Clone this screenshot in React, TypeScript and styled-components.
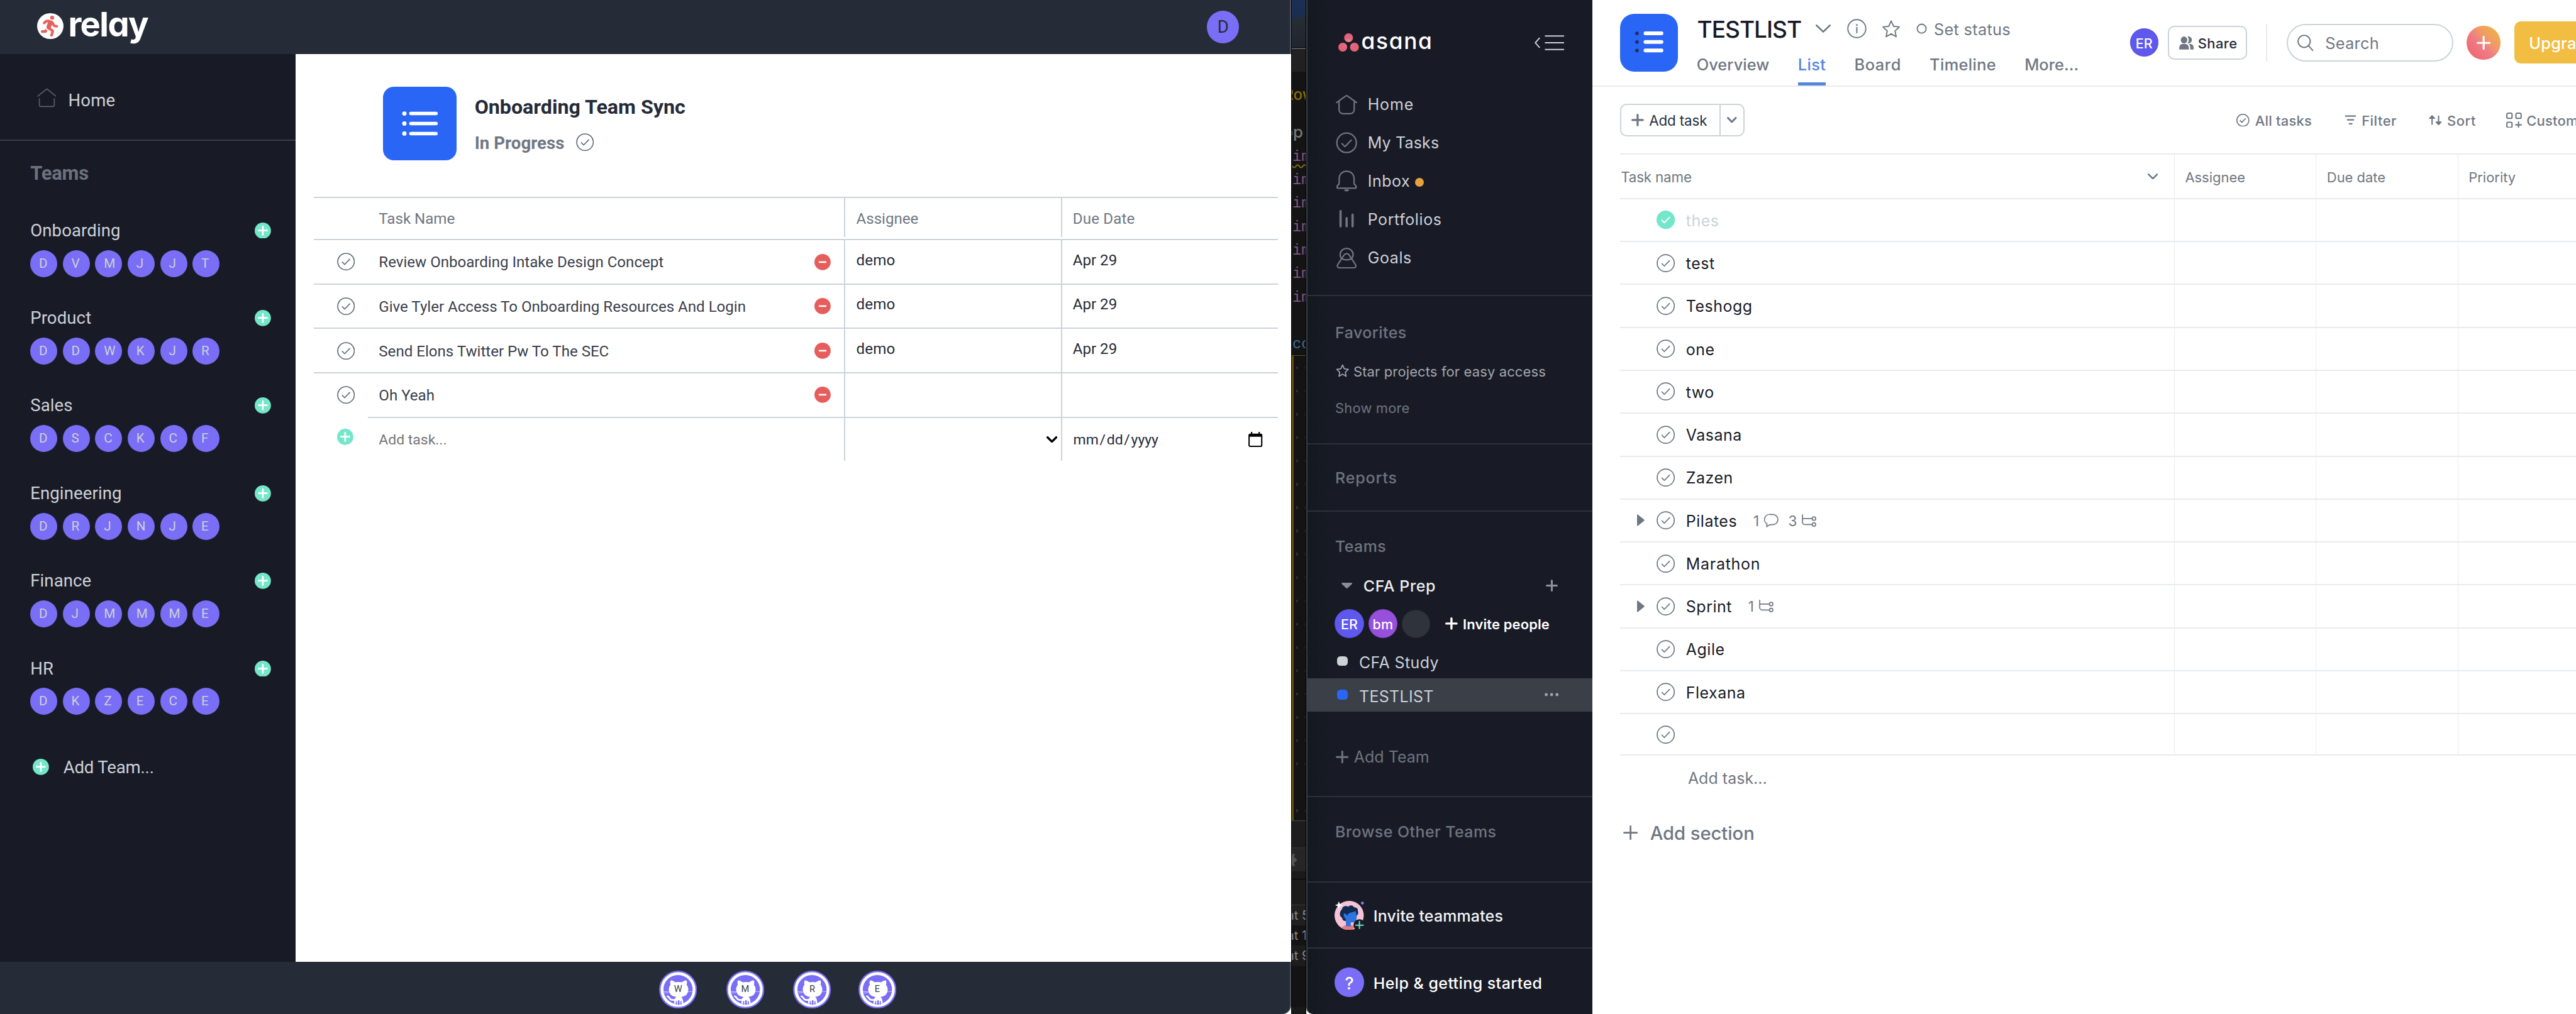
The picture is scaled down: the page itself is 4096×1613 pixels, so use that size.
import React from 'react';
import styled, { createGlobalStyle, css } from 'styled-components';
import { FaPersonRunning } from 'react-icons/fa6';

/* ---------- theme ---------- */

const c = {
  ink: '#181b26',
  bar: '#252b37',
  rule: '#3b3e48',
  sideRule: '#2b313c',
  purple: '#796ef5',
  mint: '#74e6ca',
  red: '#e55e5c',
  blue: '#2a66f5',
  grey: '#6f7782',
  muted: '#6f747f',
  line: '#cbd3da',
  hair: '#e8ebee',
  pale: '#cdd1d8',
};

const GlobalStyle = createGlobalStyle`
  *, *::before, *::after { box-sizing: border-box; }
  html, body { margin: 0; padding: 0; background: #fff; overflow: hidden; }
  svg { display: block; flex: none; }
`;

const Desktop = styled.div`
  zoom: 0.8605;
  display: grid;
  grid-template-columns: 2386px 28px 2346px;
  width: 4760px;
  height: 1875px;
  overflow: hidden;
  white-space: nowrap;
`;

interface TextProps {
  $size: number;
  $color?: string;
  $weight?: number;
  $ls?: number;
  $shift?: number;
}

const Text = styled.span<TextProps>`
  font-size: ${(p) => p.$size}px;
  font-weight: ${(p) => p.$weight ?? 400};
  color: ${(p) => p.$color ?? 'inherit'};
  letter-spacing: ${(p) => p.$ls ?? 0}px;
  line-height: 1.2;
  padding: 3px 0 0 1px;
  flex: none;
  ${(p) => p.$shift !== undefined && css`margin-top: ${p.$shift}px;`}
`;

/* ---------- shared icons ---------- */

const PlusIcon = ({ size, stroke, color }: { size: number; stroke: number; color: string }) => (
  <svg width={size} height={size} viewBox={`0 0 ${size} ${size}`} fill="none" stroke={color} strokeWidth={stroke} strokeLinecap="round">
    <path d={`M${size / 2} ${stroke / 2}V${size - stroke / 2}M${stroke / 2} ${size / 2}H${size - stroke / 2}`} />
  </svg>
);

const CheckIcon = ({ size = 34, stroke = 2, color = c.grey }: { size?: number; stroke?: number; color?: string }) => (
  <svg width={size} height={size} viewBox="0 0 34 34" fill="none" stroke={color} strokeWidth={stroke} strokeLinecap="round" strokeLinejoin="round">
    <circle cx="17" cy="17" r="15.8" />
    <path d="M10 17.8l4.4 4.6L24 12.4" />
  </svg>
);

const DoneIcon = () => (
  <svg width="34" height="34" viewBox="0 0 34 34" fill="none">
    <circle cx="17" cy="17" r="17" fill={c.mint} />
    <path d="M10 17.8l4.4 4.6L24 12.4" stroke="#fff" strokeWidth="2.2" strokeLinecap="round" strokeLinejoin="round" />
  </svg>
);

const MintPlus = () => (
  <svg width="30" height="30" viewBox="0 0 30 30">
    <circle cx="15" cy="15" r="15" fill={c.mint} />
    <path d="M15 7.4v15.2M7.4 14.8h15.2" stroke="#fff" strokeWidth="3.2" strokeLinecap="round" />
  </svg>
);

const RedMinus = () => (
  <svg width="30" height="30" viewBox="0 0 30 30">
    <circle cx="15" cy="15" r="15" fill={c.red} />
    <path d="M8 15h14" stroke="#fff" strokeWidth="3" />
  </svg>
);

const ChevronIcon = ({ w, h, stroke, color = c.grey }: { w: number; h: number; stroke: number; color?: string }) => (
  <svg width={w} height={h} viewBox={`0 0 ${w} ${h}`} fill="none" stroke={color} strokeWidth={stroke} strokeLinecap="round" strokeLinejoin="round">
    <path d={`M${stroke / 2} ${stroke / 2}L${w / 2} ${h - stroke / 2}L${w - stroke / 2} ${stroke / 2}`} />
  </svg>
);

/* ---------- relay window ---------- */

const RelayWindow = styled.div`
  display: grid;
  grid-template-rows: 100px 1678px 97px;
  font-family: Roboto, sans-serif;
  min-width: 0;
`;

const TopBar = styled.header`
  display: flex;
  align-items: center;
  justify-content: space-between;
  padding: 0 94px 0 69px;
  background: ${c.bar};
  border-right: 2.4px solid #4d525d;
`;

const RelayLogo = styled.div`
  display: flex;
  align-items: center;
  gap: 9px;
  margin-top: -4px;
`;

const RunnerDisc = styled.div`
  width: 48px;
  height: 48px;
  border-radius: 50%;
  background: #fff;
  color: #e8605c;
  display: flex;
  align-items: center;
  justify-content: center;
`;

const RelayWord = styled.span`
  font: 700 63px/1 Inter, sans-serif;
  font-feature-settings: 'cv11';
  letter-spacing: -1.8px;
  color: #fff;
  margin-top: -8px;
`;

const UserDisc = styled.div`
  width: 60px;
  height: 60px;
  border-radius: 50%;
  background: ${c.purple};
  color: ${c.bar};
  font-size: 32px;
  display: flex;
  align-items: center;
  justify-content: center;
  padding: 0 0 1px 1px;
`;

const RelayBody = styled.div`
  display: grid;
  grid-template-columns: 546px 1fr;
  background: #fff;
`;

const RelaySidebar = styled.aside`
  background: ${c.ink};
  color: ${c.pale};
`;

const HomeLink = styled.div`
  display: flex;
  align-items: center;
  gap: 21px;
  height: 160px;
  padding: 2px 0 0 68px;
  border-bottom: 2.4px solid ${c.rule};
`;

const SidebarHeading = styled.div`
  display: flex;
  align-items: center;
  height: 118px;
  padding-left: 55px;
`;

const TeamGroup = styled.section`
  height: 162px;
  padding: 28px 45px 28px 55px;
`;

const TeamHeader = styled.div`
  display: flex;
  align-items: center;
  justify-content: space-between;
  height: 36px;
  margin-bottom: 20px;
  svg { margin-top: 4px; }
`;

const MemberList = styled.div`
  display: flex;
  gap: 10px;
  padding-left: 1px;
`;

const Member = styled.span`
  width: 50px;
  height: 50px;
  border-radius: 50%;
  background: ${c.purple};
  font-size: 24px;
  line-height: 51px;
  padding-left: 16px;
`;

const AddTeamLink = styled.div`
  display: flex;
  align-items: center;
  gap: 25px;
  height: 136px;
  padding-left: 61px;
`;

const BoardHeader = styled.div`
  display: flex;
  gap: 32px;
  height: 264px;
  padding: 60px 0 0 162px;
`;

const ListTile = styled.div`
  width: 136px;
  height: 136px;
  border-radius: 20px;
  background: ${c.blue};
`;

const BoardTitle = styled.div`
  display: grid;
  grid-template-rows: 74px 58px;
`;

const TitleLine = styled.div<{ $gap: number }>`
  display: flex;
  align-items: center;
  gap: ${(p) => p.$gap}px;
`;

const RelayTable = styled.div`
  width: 1782px;
  margin-left: 34px;
`;

const RelayRow = styled.div<{ $head?: boolean }>`
  display: grid;
  grid-template-columns: 100px 880px 400px 402px;
  height: ${(p) => (p.$head ? 78 : 82)}px;
`;

const RelayCell = styled.div<{ $split?: boolean; $raise?: number; $noRule?: boolean; $short?: boolean; $end?: number }>`
  display: flex;
  align-items: center;
  justify-content: space-between;
  height: ${(p) => (p.$short ? '74px' : '100%')};
  padding: 0 ${(p) => p.$end ?? 0}px ${(p) => p.$raise ?? 0}px 19px;
  border-top: 2.4px solid ${(p) => (p.$noRule ? 'transparent' : c.line)};
  border-left: ${(p) => (p.$split ? `2.4px solid ${c.line}` : '0')};
  font-size: 28px;
  color: ${c.bar};
`;

const MarkCell = styled(RelayCell)`
  justify-content: flex-start;
  padding-left: 43px;
`;

const DateField = styled.span`
  font-size: 26.67px;
  padding-top: 2px;
  span { padding: 0 2px; }
`;

const RelayFooter = styled.footer`
  display: flex;
  gap: 54px;
  padding: 16px 0 0 1218px;
  background: ${c.bar};
  border-right: 2.4px solid #4d525d;
  border-bottom-right-radius: 16px;
`;

const CatBadge = styled.div<{ $pull?: boolean }>`
  position: relative;
  width: 70px;
  height: 70px;
  margin-left: ${(p) => (p.$pull ? -4 : 0)}px;
`;

const CatLetter = styled.span`
  position: absolute;
  inset: 0;
  display: flex;
  align-items: center;
  justify-content: center;
  font-size: 17px;
  color: #3a3f4b;
  padding-bottom: 1px;
`;

const teams: [string, string][] = [
  ['Onboarding', 'DVMJJT'],
  ['Product', 'DDWKJR'],
  ['Sales', 'DSCKCF'],
  ['Engineering', 'DRJNJE'],
  ['Finance', 'DJMMME'],
  ['HR', 'DKZECE'],
];

const relayTasks: [string, string, string][] = [
  ['Review Onboarding Intake Design Concept', 'demo', 'Apr 29'],
  ['Give Tyler Access To Onboarding Resources And Login', 'demo', 'Apr 29'],
  ['Send Elons Twitter Pw To The SEC', 'demo', 'Apr 29'],
  ['Oh Yeah', '', ''],
];

const CatIcon = () => (
  <svg width="70" height="70" viewBox="0 0 70 70">
    <circle cx="35" cy="35" r="35" fill={c.purple} />
    <circle cx="35" cy="35" r="29.6" fill="none" stroke="#fff" strokeWidth="5.2" />
    <path d="M21.6 18c-1.7 3-1.2 6.200-.4 8.200C19 28.500 18 31.500 18 35c0 9 6.500 13.300 14 13.600-3 2-4.300 5.400-4.300 12.400h17c0-7-1.200-10.400-4.200-12.400C48 48.300 54 44 54 35c0-3.500-1.200-6.500-3.200-8.800.8-2 1.200-5.200-.2-8.200-3.300 0-6.600 1.800-8.600 3.600-3.500-1-8.500-1-12 0-2-1.800-5.100-3.600-8.400-3.600z" fill="#fff" />
    <path d="M15.600 47.400c3.400.2 3.600 6.100 7.600 6.600 3 .5 6 .2 8-.4" fill="none" stroke="#fff" strokeWidth="3.200" strokeLinecap="round" />
    <path d="M31.800 57v5M40.400 57v5" stroke={c.purple} strokeWidth="2" strokeLinecap="round" />
    <path d="M36.200 56v6" stroke={c.purple} strokeWidth="3" strokeLinecap="round" />
    <path d="M8 38.500l10 .6M9 41.500l9-1.200M54 39l10-.4" stroke="#fff" strokeOpacity=".55" strokeWidth="1.200" />
  </svg>
);

const Relay = () => (
  <RelayWindow>
    <TopBar>
      <RelayLogo>
        <RunnerDisc><FaPersonRunning size={39} /></RunnerDisc>
        <RelayWord>relay</RelayWord>
      </RelayLogo>
      <UserDisc>D</UserDisc>
    </TopBar>
    <RelayBody>
      <RelaySidebar>
        <HomeLink>
          <svg width="36" height="38" viewBox="0 0 36 38" fill="none" stroke="#5f636e" strokeWidth="1.8" strokeLinecap="round" strokeLinejoin="round">
            <path d="M1 17.500L18 4l17 13.500M4.200 22v12.500c0 1.200.8 2 2 2h23.600c1.200 0 2-.8 2-2V22" />
          </svg>
          <Text $size={32} $ls={0.25} $shift={7}>Home</Text>
        </HomeLink>
        <SidebarHeading><Text $size={36} $weight={700} $color="#6d717c" $ls={-0.25}>Teams</Text></SidebarHeading>
        {teams.map(([name, members]) => (
          <TeamGroup key={name}>
            <TeamHeader><Text $size={32} $ls={0.15}>{name}</Text><MintPlus /></TeamHeader>
            <MemberList>{members.split('').map((m, i) => <Member key={i}>{m}</Member>)}</MemberList>
          </TeamGroup>
        ))}
        <AddTeamLink><MintPlus /><Text $size={32} $ls={-0.18} $shift={-3}>Add Team...</Text></AddTeamLink>
      </RelaySidebar>
      <main>
        <BoardHeader>
          <ListTile>
            <svg width="136" height="136" viewBox="0 0 136 136" stroke="#fff" strokeLinecap="round">
              <path d="M51.500 49.500H98M51.500 68H98M51.500 86.500H98" strokeWidth="6.400" />
              <path d="M39.500 49.500h.01M39.500 68h.01M39.500 86.500h.01" strokeWidth="8" />
            </svg>
          </ListTile>
          <BoardTitle>
            <TitleLine $gap={0}><Text $size={37.4} $weight={700} $color={c.bar}>Onboarding Team Sync</Text></TitleLine>
            <TitleLine $gap={21}>
              <Text $size={32} $weight={700} $color={c.grey} $ls={0.1}>In Progress</Text>
              <CheckIcon size={33} color="#636b78" />
            </TitleLine>
          </BoardTitle>
        </BoardHeader>
        <RelayTable>
          <RelayRow $head>
            <MarkCell $short />
            <RelayCell $short><Text $size={28} $color={c.grey} $shift={2}>Task Name</Text></RelayCell>
            <RelayCell $short $split><Text $size={28} $color={c.grey} $shift={2}>Assignee</Text></RelayCell>
            <RelayCell $short $split><Text $size={28} $color={c.grey} $shift={2} $ls={0.2}>Due Date</Text></RelayCell>
          </RelayRow>
          {relayTasks.map(([name, who, due]) => (
            <RelayRow key={name}>
              <MarkCell><CheckIcon size={33} color="#636b78" /></MarkCell>
              <RelayCell $end={25}><Text $size={28} $color="#3b404c">{name}</Text><RedMinus /></RelayCell>
              <RelayCell $split $raise={9}><Text $size={28} $ls={0.2}>{who}</Text></RelayCell>
              <RelayCell $split $raise={9}><Text $size={28}>{due}</Text></RelayCell>
            </RelayRow>
          ))}
          <RelayRow>
            <MarkCell $noRule $raise={8}><MintPlus /></MarkCell>
            <RelayCell><Text $size={26.67} $color="#757575">Add task...</Text></RelayCell>
            <RelayCell $split $end={6}><span /><ChevronIcon w={20} h={12} stroke={4} color="#000" /></RelayCell>
            <RelayCell $split $end={29}>
              <DateField><span>mm</span>/<span>dd</span>/<span>yyyy</span></DateField>
              <svg width="26" height="28" viewBox="0 0 26 28" fill="none" stroke="#000">
                <rect x="1.300" y="4.300" width="23.400" height="22.400" rx="2" strokeWidth="2.400" />
                <path d="M1.500 6.500h23" strokeWidth="5" />
                <path d="M6 0v4M20 0v4" strokeWidth="2.400" />
              </svg>
            </RelayCell>
          </RelayRow>
        </RelayTable>
      </main>
    </RelayBody>
    <RelayFooter>
      {['W', 'M', 'R', 'E'].map((l) => (
        <CatBadge key={l} $pull={l === 'E'}><CatIcon /><CatLetter>{l}</CatLetter></CatBadge>
      ))}
    </RelayFooter>
  </RelayWindow>
);

/* ---------- editor showing between the two windows ---------- */

const EditorStrip = styled.div`
  overflow: hidden;
  background: #141414;
  border-left: 1.2px solid #000;
  border-right: 1.2px solid #000;
  font-family: Inter, sans-serif;
`;

const Wallpaper = styled.div`
  height: 88px;
  background: linear-gradient(165deg, #1b2f57 0, #1b2d50 34%, #272b34 42%, #1f252e 100%);
  border-bottom: 1.2px solid #000;
`;

const EditorTab = styled.div`
  height: 44px;
  background: #212121;
  border-top: 2.4px solid #555;
`;

const EditorWord = styled.div<{ $h: number; $x: number; $size: number; $color: string }>`
  height: ${(p) => p.$h}px;
  line-height: ${(p) => p.$h}px;
  margin-left: ${(p) => p.$x}px;
  font-size: ${(p) => p.$size}px;
  font-weight: 500;
  color: ${(p) => p.$color};
`;

const CodeLine = styled.div<{ $color: string; $wavy?: boolean; $top?: number }>`
  height: 43.4px;
  line-height: 43.4px;
  margin-top: ${(p) => p.$top ?? 0}px;
  font-family: 'Liberation Mono', monospace;
  font-size: 27.5px;
  padding-left: 1px;
  color: ${(p) => p.$color};
  ${(p) => p.$wavy && css`
    text-decoration: underline wavy #8a7000 2px;
    text-underline-offset: 6px;
  `}
`;

const SelectionBox = styled.div`
  height: 859px;
  margin-top: -1px;
  padding: 19px 0 0 4px;
  border-left: 3.5px solid #5f5012;
  border-top: 1.2px solid #5f5012;
`;

const DotRow = styled.div<{ $empty?: boolean }>`
  display: flex;
  justify-content: space-between;
  height: 43.1px;
  visibility: ${(p) => (p.$empty ? 'hidden' : 'visible')};
  &::before, &::after { content: ''; width: 4.500px; height: 5px; background: #2e2e2e; }
  &::after { width: 1.500px; }
`;

const PanelBlock = styled.div<{ $h: number; $bg: string; $top?: string }>`
  height: ${(p) => p.$h}px;
  line-height: ${(p) => p.$h}px;
  background: ${(p) => p.$bg};
  border-top: ${(p) => (p.$top ? `1.2px solid ${p.$top}` : '0')};
  color: #878787;
  font-size: 23.500px;
  text-indent: -9px;
  overflow: hidden;
`;

const Editor = () => (
  <EditorStrip>
    <Wallpaper />
    <EditorTab />
    <EditorWord $h={86} $x={-15} $size={28} $color="#8a7000">Row</EditorWord>
    <EditorWord $h={50} $x={-16} $size={30} $color="#777">op</EditorWord>
    {[0, 1, 2, 3, 4, 5, 6].map((i) => <CodeLine key={i} $color="#85577f" $wavy={i === 0}>import</CodeLine>)}
    <CodeLine $color="#3b6b96" $top={43}>const</CodeLine>
    <SelectionBox>{Array.from({ length: 20 }, (_, i) => <DotRow key={i} $empty={i === 18} />)}</SelectionBox>
    <PanelBlock $h={50} $bg="#1d1d1d" $top="#4a4a4a" />
    <PanelBlock $h={44} $bg="#262626" $top="#333">
      <svg width="9" height="44" viewBox="0 0 9 44" fill="none" stroke="#555" strokeWidth="4.500"><path d="M0 22h9M0 17a5 5 0 0 1 0 10M2 15l2-4M2 29l2 4" /></svg>
    </PanelBlock>
    <PanelBlock $h={15} $bg="#1a1a1a" />
    <PanelBlock $h={47} $bg="#1c1c1c" $top="#000" />
    <PanelBlock $h={38} $bg="#202020" $top="#3a3a3a">at 5</PanelBlock>
    <PanelBlock $h={38} $bg="#141414">at 1</PanelBlock>
    <PanelBlock $h={38} $bg="#1d1d1d">at 9</PanelBlock>
    <PanelBlock $h={76} $bg="#131313" />
    <PanelBlock $h={14} $bg="#191919" />
  </EditorStrip>
);

/* ---------- asana window ---------- */

const AsanaWindow = styled.div`
  display: grid;
  grid-template-columns: 528px 1818px;
  font-family: Inter, sans-serif;
  overflow: hidden;
`;

const AsanaSidebar = styled.aside`
  background: linear-gradient(90deg, #141920 0, ${c.ink} 60px);
  border-left: 2.4px solid #3a3e47;
  border-bottom-left-radius: 12px;
  color: ${c.pale};
`;

const AsanaTop = styled.div`
  display: flex;
  align-items: center;
  height: 157.600px;
  padding: 0 52px 0 57px;
`;

const AsanaWord = styled.span`
  font: 500 41px/1 Inter, sans-serif;
  font-feature-settings: 'cv11';
  letter-spacing: 2px;
  color: #fff;
  margin: -4px auto 0 4px;
`;

const NavList = styled.nav`
  height: 390px;
  border-bottom: 2.4px solid ${c.sideRule};
`;

const NavItem = styled.div`
  display: flex;
  align-items: center;
  gap: 18px;
  height: 70.800px;
  padding-left: 52px;
  svg { stroke: #70757f; fill: none; stroke-width: 2.600; stroke-linecap: round; stroke-linejoin: round; }
`;

const UnreadDot = styled.i`
  width: 16px;
  height: 16px;
  border-radius: 50%;
  background: #e6a33c;
  margin: 4px 0 0 -9px;
`;

const SideSection = styled.section<{ $h: number; $pad?: number }>`
  height: ${(p) => p.$h}px;
  padding-top: ${(p) => p.$pad ?? 0}px;
  border-bottom: 2.4px solid ${c.sideRule};
  &:last-child { border-bottom: 0; }
`;

const SideLine = styled.div<{ $h: number; $x?: number; $gap?: number; $top?: number; $end?: number; $active?: boolean }>`
  display: flex;
  align-items: center;
  gap: ${(p) => p.$gap ?? 0}px;
  height: ${(p) => p.$h}px;
  margin-top: ${(p) => p.$top ?? 0}px;
  padding: 0 ${(p) => p.$end ?? 0}px 0 ${(p) => p.$x ?? 50}px;
  background: ${(p) => (p.$active ? '#3b3f47' : 'transparent')};
`;

const Spacer = styled.span`
  flex: 1;
`;

const Person = styled.span<{ $bg: string; $size?: number }>`
  flex: none;
  width: ${(p) => p.$size ?? 54}px;
  height: ${(p) => p.$size ?? 54}px;
  border-radius: 50%;
  background: ${(p) => p.$bg};
  box-shadow: inset 0 0 2px rgba(0, 0, 0, 0.35);
  color: #fff;
  font-size: 25px;
  font-weight: 500;
  display: flex;
  align-items: center;
  justify-content: center;
  padding-top: 2px;
`;

const ProjectSwatch = styled.span<{ $bg: string }>`
  width: 20px;
  height: 18px;
  border-radius: 6px;
  background: ${(p) => p.$bg};
  margin-top: -2px;
`;

const HelpDisc = styled(Person)`
  font-size: 31px;
  font-weight: 500;
  box-shadow: none;
`;

const StarIcon = ({ size, stroke, color }: { size: number; stroke: number; color: string }) => (
  <svg width={size} height={size} viewBox="0 0 33 33" fill="none" stroke={color} strokeWidth={stroke} strokeLinejoin="round">
    <path d="M16.500 2.500l4.200 9.300 10.100 1.200-7.500 7 2 10-8.800-5-8.800 5 2-10-7.500-7 10.100-1.200z" />
  </svg>
);

const InviteArt = () => (
  <svg width="54" height="54" viewBox="0 0 54 54">
    <circle cx="27" cy="27" r="27" fill="#f4c3d6" />
    <path d="M13 49c5-4 9-4 14-4s7 0 9 2l-2 6c-8 2.300-15 .5-21-4z" fill="#ea7a80" />
    <path d="M14 15c0-5 8-7 11-4 4-4 9-3 11 1 5 0 8 3 7 7 2 3 0 8-3 9l-17 9c-6 1-9-2-9-6-5-2-6-10 0-16z" fill="#102a52" />
    <path d="M17 24c1-2 5 0 7 4 0-4 2-5 5-6 5-1 8-2 10-3 1 4 2 8 2 11l-1 7c-2 3-6 3-10 3v7h-9V34c-3-3-5-7-4-10z" fill="#2e74dc" />
    <circle cx="46" cy="45" r="11" fill="#181b26" />
    <path d="M46 38v13M39.500 45H53" stroke="#6ce3c4" strokeWidth="2.400" strokeLinecap="round" />
    <path d="M8 1l2 5 5 2-5 2-2 5-2-5-5-2 5-2z" fill="#fff" />
    <circle cx="51.500" cy="4" r="2.600" fill="#8b83f2" />
  </svg>
);

const Sidebar = () => (
  <AsanaSidebar>
    <AsanaTop>
      <svg width="38" height="34" viewBox="0 0 38 34">
        <defs>
          <radialGradient id="petal" gradientUnits="userSpaceOnUse" cx="19" cy="18" r="20">
            <stop offset="0" stopColor="#f2a55c" /><stop offset=".5" stopColor="#e2628a" /><stop offset="1" stopColor="#e36468" />
          </radialGradient>
        </defs>
        <g fill="url(#petal)"><circle cx="19" cy="8.200" r="8.200" /><circle cx="8.200" cy="25.600" r="8.200" /><circle cx="29.800" cy="25.600" r="8.200" /></g>
      </svg>
      <AsanaWord>asana</AsanaWord>
      <svg width="55" height="28" viewBox="0 0 55 28" fill="none" stroke="#cfd3d9" strokeWidth="2.200" strokeLinecap="round">
        <path d="M9 5.500L1.500 14 9 22.500M20 1.500h34M20 14h34M20 26.500h34" />
      </svg>
    </AsanaTop>
    <NavList>
      <NavItem>
        <svg width="40" height="40" viewBox="0 0 40 40"><path d="M1.500 16.500L18.500 4.200c.9-.7 2.100-.7 3 0l17 12.300M6 14v16a7 7 0 0 0 7 7h14a7 7 0 0 0 7-7V14" /></svg>
        <Text $size={29} $ls={1}>Home</Text>
      </NavItem>
      <NavItem>
        <svg width="40" height="40" viewBox="0 0 40 40"><circle cx="20" cy="20" r="18" /><path d="M11.500 21.500l5.500 5.500L28.500 15" /></svg>
        <Text $size={29} $ls={0.23}>My Tasks</Text>
      </NavItem>
      <NavItem>
        <svg width="40" height="40" viewBox="0 0 40 40"><path d="M20 1.500c-8 0-13.800 6-13.800 14v9.500c-1.600 1.200-3 3-3.800 5-.7 1.500.2 3 2 3h31.200c1.800 0 2.700-1.500 2-3-.8-2-2.200-3.800-3.800-5v-9.500c0-8-5.800-14-13.800-14zM17 36.500c1.500 1.500 4.500 1.500 6 0z" /></svg>
        <Text $size={29} $ls={0.65}>Inbox</Text>
        <UnreadDot />
      </NavItem>
      <NavItem>
        <svg width="40" height="40" viewBox="0 0 40 40"><path d="M8.800 4.500v28M20 17.500v15M31 11v21.500" strokeWidth="4.200" /></svg>
        <Text $size={29} $ls={0.7}>Portfolios</Text>
      </NavItem>
      <NavItem>
        <svg width="40" height="40" viewBox="0 0 40 40"><path d="M11 21.500a12 11.500 0 1 1 18 0c-5 3-13 3-18 0z" /><path d="M15.500 14.500L3.600 32.500c-1.800 3 0 6 3.400 6h26c3.400 0 5.200-3 3.400-6L24.500 14.500c-2.300-3.300-6.700-3.300-9 0z" /></svg>
        <Text $size={29} $ls={0.72}>Goals</Text>
      </NavItem>
    </NavList>
    <SideSection $h={274.500} $pad={33}>
      <SideLine $h={67}><Text $size={29} $weight={500} $color={c.muted} $ls={0.55}>Favorites</Text></SideLine>
      <SideLine $h={75} $x={51.500} $gap={7}>
        <StarIcon size={25} stroke={2.600} color="#a2a6ad" />
        <Text $size={25.500} $color="#a2a6ad" $ls={0.17}>Star projects for easy access</Text>
      </SideLine>
      <SideLine $h={60}><Text $size={25.500} $color={c.muted} $ls={0.19}>Show more</Text></SideLine>
    </SideSection>
    <SideSection $h={124}>
      <SideLine $h={122}><Text $size={29} $weight={500} $color={c.muted} $ls={1}>Reports</Text></SideLine>
    </SideSection>
    <SideSection $h={528} $pad={24}>
      <SideLine $h={79}><Text $size={29} $weight={500} $color={c.muted} $ls={0.45}>Teams</Text></SideLine>
      <SideLine $h={68} $x={63} $gap={19} $end={64}>
        <svg width="20" height="11" viewBox="0 0 20 11" fill="#8a8d94"><path d="M1.500 0h17c1.300 0 1.800 1.300.9 2.200L11 10.300a1.500 1.500 0 0 1-2 0L.6 2.200C-.3 1.300.2 0 1.500 0z" /></svg>
        <Text $size={29} $weight={450} $color="#eceef0" $ls={0.7}>CFA Prep</Text>
        <Spacer />
        <PlusIcon size={22} stroke={3.600} color="#8e9198" />
      </SideLine>
      <SideLine $h={72} $gap={8}>
        <Person $bg="#5f58ee">ER</Person>
        <Person $bg="#9650dc">bm</Person>
        <Person $bg="#2f333b" $size={52} />
        <SideLine $h={54} $x={20} $gap={9}>
          <PlusIcon size={23} stroke={4} color="#fff" />
          <Text $size={25.500} $weight={600} $color="#fff" $ls={0.15}>Invite people</Text>
        </SideLine>
      </SideLine>
      <SideLine $h={62} $top={3} $x={54} $gap={20}>
        <ProjectSwatch $bg={c.pale} /><Text $size={29} $ls={0.5} $shift={3}>CFA Study</Text>
      </SideLine>
      <SideLine $h={62} $x={54} $gap={20} $end={62} $active>
        <ProjectSwatch $bg={c.blue} /><Text $size={29} $ls={0.39} $shift={4}>TESTLIST</Text>
        <Spacer />
        <svg width="26" height="8" viewBox="0 0 26 8" fill="#a2a6ad"><circle cx="3" cy="3.500" r="2.800" /><circle cx="13" cy="3.500" r="2.800" /><circle cx="23" cy="3.500" r="2.800" /></svg>
      </SideLine>
      <SideLine $h={86} $top={40} $x={51.500} $gap={9}>
        <PlusIcon size={24} stroke={3.400} color={c.muted} />
        <Text $size={29} $color={c.muted} $ls={0.06}>Add Team</Text>
      </SideLine>
    </SideSection>
    <SideSection $h={158}>
      <SideLine $h={126}><Text $size={29} $weight={500} $color={c.muted} $ls={0.53}>Browse Other Teams</Text></SideLine>
    </SideSection>
    <SideSection $h={122}>
      <SideLine $h={120} $gap={16.500}><InviteArt /><Text $size={29} $weight={500} $color="#f2f3f5" $ls={0.19} $shift={2}>Invite teammates</Text></SideLine>
    </SideSection>
    <SideSection $h={120} $pad={4}>
      <SideLine $h={116} $gap={16.500}><HelpDisc $bg={c.purple}>?</HelpDisc><Text $size={29} $weight={500} $color="#fff" $ls={0.52} $shift={2}>Help &amp; getting started</Text></SideLine>
    </SideSection>
  </AsanaSidebar>
);

const Pane = styled.main`
  background: #fff;
  overflow: hidden;
  color: ${c.ink};
`;

const PaneHeader = styled.header`
  display: flex;
  height: 160px;
  padding-left: 52px;
  border-bottom: 2.4px solid ${c.hair};
`;

const ProjectTile = styled.div`
  flex: none;
  width: 106px;
  height: 106px;
  margin: 26px 35px 0 0;
  border-radius: 26px;
  background: ${c.blue};
`;

const ProjectHead = styled.div`
  flex: none;
  width: 801px;
  display: grid;
  grid-template-rows: 106px 52px;
`;

const TitleItem = styled.span<{ $left: number }>`
  display: flex;
  align-items: center;
  margin-left: ${(p) => p.$left}px;
`;

const Tabs = styled.div`
  display: flex;
  gap: 52.500px;
`;

const Tab = styled.span<{ $on?: boolean; $ls: number }>`
  font-size: 29.500px;
  font-weight: 500;
  line-height: 28px;
  letter-spacing: ${(p) => p.$ls}px;
  color: ${(p) => (p.$on ? '#5585dd' : c.grey)};
  border-bottom: ${(p) => (p.$on ? '5.900px solid #5585dd' : '0')};
`;

const Actions = styled.div`
  flex: none;
  display: flex;
  align-items: center;
`;

const ShareButton = styled.div`
  display: flex;
  align-items: center;
  gap: 7px;
  width: 146px;
  height: 62px;
  margin: 0 35px 0 18px;
  padding: 1px 0 0 18px;
  border: 2.4px solid ${c.line};
  border-radius: 12px;
`;

const Divider = styled.span`
  width: 2.400px;
  height: 70px;
  background: ${c.hair};
  margin-right: 36px;
`;

const SearchBox = styled.div`
  display: flex;
  align-items: center;
  gap: 20px;
  width: 308px;
  height: 70px;
  padding-left: 18px;
  border: 2.4px solid ${c.line};
  border-radius: 35px;
`;

const CreateButton = styled.div`
  display: flex;
  align-items: center;
  justify-content: center;
  width: 62px;
  height: 62px;
  margin: 0 26px 0 25px;
  border-radius: 50%;
  background: linear-gradient(45deg, #f0646c 5%, #ee7b84 42%, #f09a68 62%, #f1b147 90%);
`;

const UpgradeButton = styled.div`
  display: flex;
  align-items: center;
  width: 200px;
  height: 78px;
  padding-left: 26px;
  border-radius: 12px;
  background: #f1bd42;
`;

const Toolbar = styled.div`
  display: flex;
  align-items: center;
  height: 124px;
  padding-left: 52px;
`;

const AddTaskButton = styled.div`
  flex: none;
  display: flex;
  width: 230px;
  height: 60px;
  border: 2.4px solid ${c.line};
  border-radius: 12px;
`;

const AddTaskMain = styled.span`
  display: flex;
  align-items: center;
  gap: 9px;
  width: 183px;
  padding-left: 18px;
  border-right: 2.4px solid ${c.line};
`;

const AddTaskMore = styled.span`
  flex: 1;
  display: flex;
  align-items: center;
  justify-content: center;
`;

const ToolList = styled.div`
  flex: none;
  display: grid;
  grid-template-columns: 200px 155px 143.500px auto;
  margin-left: 909px;
`;

const Tool = styled.span<{ $gap: number }>`
  display: flex;
  align-items: center;
  gap: ${(p) => p.$gap}px;
`;

const TaskTable = styled.div`
  margin-left: 52px;
`;

const TaskRow = styled.div<{ $head?: boolean }>`
  display: grid;
  grid-template-columns: 1023.500px 262px 262px 218.500px;
  height: ${(p) => (p.$head ? '82px' : '79.350px')};
  border-top: 2.4px solid ${c.hair};
  &:last-of-type { border-bottom: 2.4px solid ${c.hair}; }
`;

const TaskCell = styled.div<{ $split?: boolean; $x?: number; $end?: number }>`
  display: flex;
  align-items: center;
  padding: 0 ${(p) => p.$end ?? 0}px 0 ${(p) => p.$x ?? 0}px;
  border-left: ${(p) => (p.$split ? `1.2px solid ${c.hair}` : '0')};
`;

const Expander = styled.span`
  width: 67px;
  padding-left: 31px;
`;

const TaskMeta = styled.span`
  display: flex;
  align-items: center;
  gap: 9px;
  margin-left: 17px;
  &:first-of-type { margin-left: 0; }
`;

const AddTaskLine = styled.div`
  display: flex;
  align-items: center;
  height: 83px;
  padding-left: 176px;
`;

const AddSectionLine = styled.div`
  display: flex;
  align-items: center;
  gap: 22px;
  height: 118px;
  padding-left: 57px;
`;

const BubbleIcon = () => (
  <svg width="27" height="26" viewBox="0 0 27 26" fill="none" stroke={c.grey} strokeWidth="2" strokeLinejoin="round">
    <path d="M11 1.500h5a9.500 9.500 0 0 1 0 19h-5.500L5 24.300l.2-5.300A9.500 9.500 0 0 1 11 1.500z" />
  </svg>
);

const SubtaskIcon = () => (
  <svg width="27" height="24" viewBox="0 0 27 24" fill="none" stroke={c.grey} strokeWidth="2" strokeLinecap="round">
    <path d="M1.200 1v13.500a4.500 4.500 0 0 0 4.500 4.500H19M1.200 8H19" />
    <circle cx="22.400" cy="8" r="3.200" /><circle cx="22.400" cy="19" r="3.200" />
  </svg>
);

interface Task { name: string; done?: boolean; comments?: number; subtasks?: number; ls?: number }

const tasks: Task[] = [
  { name: 'thes', done: true },
  { name: 'test' },
  { name: 'Teshogg' },
  { name: 'one' },
  { name: 'two' },
  { name: 'Vasana' },
  { name: 'Zazen' },
  { name: 'Pilates', comments: 1, subtasks: 3 },
  { name: 'Marathon', ls: 0.84 },
  { name: 'Sprint', subtasks: 1 },
  { name: 'Agile' },
  { name: 'Flexana' },
  { name: '' },
];

const TaskPane = () => (
  <Pane>
    <PaneHeader>
      <ProjectTile>
        <svg width="106" height="106" viewBox="0 0 106 106" strokeLinecap="round">
          <path d="M47 36h29.500M47 52h29.500M47 67.800h29.500" stroke="#fff" strokeWidth="7" />
          <path d="M31.200 36h.01M31.200 52h.01M31.200 67.800h.01" stroke="#1c2f5e" strokeWidth="6.600" />
        </svg>
      </ProjectTile>
      <ProjectHead>
        <TitleLine $gap={0}>
          <Text $size={43} $weight={500} $ls={-1.14}>TESTLIST</Text>
          <TitleItem $left={27}><ChevronIcon w={28} h={15} stroke={3} /></TitleItem>
          <TitleItem $left={30}>
            <svg width="36" height="36" viewBox="0 0 36 36" fill="none" stroke={c.grey} strokeWidth="2.200" strokeLinecap="round">
              <circle cx="18" cy="18" r="16.600" /><path d="M18 16v9.500" strokeWidth="2.400" /><path d="M18 11.200h.01" strokeWidth="3.200" />
            </svg>
          </TitleItem>
          <TitleItem $left={27}><StarIcon size={35} stroke={2.100} color={c.grey} /></TitleItem>
          <TitleItem $left={30}>
            <svg width="20" height="20" viewBox="0 0 20 20" fill="none" stroke={c.grey} strokeWidth="2.200"><circle cx="10" cy="10" r="8.200" /></svg>
          </TitleItem>
          <TitleItem $left={11}><Text $size={29.500} $color={c.grey} $ls={0.32}>Set status</Text></TitleItem>
        </TitleLine>
        <Tabs>
          <Tab $ls={0.1}>Overview</Tab>
          <Tab $ls={0.5} $on>List</Tab>
          <Tab $ls={0.6}>Board</Tab>
          <Tab $ls={0.38}>Timeline</Tab>
          <Tab $ls={0.03}>More...</Tab>
        </Tabs>
      </ProjectHead>
      <Actions>
        <Person $bg="#5f58ee" $size={52}>ER</Person>
        <ShareButton>
          <svg width="27" height="24" viewBox="0 0 27 24" fill={c.grey}>
            <ellipse cx="9" cy="6.500" rx="6" ry="6.500" /><path d="M0 23c0-5 2-9 6-9h6c4 0 6 4 6 9 0 .6-.4 1-1 1H1c-.6 0-1-.4-1-1z" />
            <path d="M15.500.3c4.500-1 8 2 8 6.200s-3.500 7.200-8 6c3-3.500 3-8.700 0-12.200zM18 14h3c4 0 6 4 6 9 0 .6-.4 1-1 1h-5.500c.5-4-.2-7.500-2.500-10z" />
          </svg>
          <Text $size={25.500} $weight={450} $color={c.bar} $ls={0.5}>Share</Text>
        </ShareButton>
        <Divider />
        <SearchBox>
          <svg width="30" height="31" viewBox="0 0 30 31" fill="none" stroke={c.grey} strokeWidth="2.300" strokeLinecap="round"><circle cx="12.500" cy="12.500" r="11.200" /><path d="M20.500 20.500L28.500 29.500" /></svg>
          <Text $size={29.500} $color={c.grey} $ls={0.31} $shift={1}>Search</Text>
        </SearchBox>
        <CreateButton><PlusIcon size={26} stroke={3.600} color="#fff" /></CreateButton>
        <UpgradeButton><Text $size={29.500} $weight={500} $color="#fff" $ls={0.2}>Upgrade</Text></UpgradeButton>
      </Actions>
    </PaneHeader>
    <Toolbar>
      <AddTaskButton>
        <AddTaskMain><PlusIcon size={23} stroke={3.800} color={c.grey} /><Text $size={26} $color="#283141" $ls={-0.15}>Add task</Text></AddTaskMain>
        <AddTaskMore><ChevronIcon w={18} h={11} stroke={3.400} /></AddTaskMore>
      </AddTaskButton>
      <ToolList>
        <Tool $gap={9}><CheckIcon size={24} stroke={2.800} /><Text $size={25.500} $weight={500} $color={c.grey} $ls={0.25}>All tasks</Text></Tool>
        <Tool $gap={10}>
          <svg width="20" height="18" viewBox="0 0 20 18" stroke={c.grey} strokeWidth="2.600"><path d="M0 2h20M3.500 9h13M6.800 16h6.500" /></svg>
          <Text $size={25.500} $weight={500} $color={c.grey} $ls={0.57}>Filter</Text>
        </Tool>
        <Tool $gap={9}>
          <svg width="24" height="19" viewBox="0 0 24 19" fill={c.grey} stroke={c.grey} strokeWidth="2" strokeLinejoin="round"><path d="M6 18V5M18 1v13" strokeWidth="2.400" /><path d="M1.500 6L6 1.200 10.500 6zM13.500 13l4.500 4.800 4.500-4.800z" /></svg>
          <Text $size={25.500} $weight={500} $color={c.grey} $ls={0.61}>Sort</Text>
        </Tool>
        <Tool $gap={7}>
          <svg width="29" height="29" viewBox="0 0 29 29" fill="none" stroke={c.grey} strokeWidth="2.400" strokeLinecap="round">
            <rect x="1.200" y="1.200" width="9.600" height="9.600" rx="2.500" /><rect x="18" y="1.200" width="9.600" height="9.600" rx="2.500" /><rect x="1.200" y="18" width="9.600" height="9.600" rx="2.500" />
            <path d="M22.800 17.500v10.500M17.500 22.800H28" />
          </svg>
          <Text $size={25.500} $weight={500} $color={c.grey} $ls={0.3}>Customize</Text>
        </Tool>
      </ToolList>
    </Toolbar>
    <TaskTable>
      <TaskRow $head>
        <TaskCell $end={30}><Text $size={26} $color={c.grey} $ls={-0.19}>Task name</Text><Spacer /><ChevronIcon w={19} h={11} stroke={3} /></TaskCell>
        <TaskCell $split $x={18}><Text $size={25.500} $color={c.grey}>Assignee</Text></TaskCell>
        <TaskCell $split $x={18}><Text $size={25.500} $color={c.grey}>Due date</Text></TaskCell>
        <TaskCell $split $x={18}><Text $size={25.500} $color={c.grey}>Priority</Text></TaskCell>
      </TaskRow>
      {tasks.map((t, i) => (
        <TaskRow key={i}>
          <TaskCell>
            <Expander>{t.subtasks && <svg width="14" height="22" viewBox="0 0 14 22" fill={c.grey}><path d="M0 1.500C0 .3 1 0 1.800.8L13 9.800c.8.700.8 1.700 0 2.400L1.800 21.200C1 22 0 21.700 0 20.500z" /></svg>}</Expander>
            {t.done ? <DoneIcon /> : <CheckIcon />}
            <TitleItem $left={19.500}><Text $size={29} $color={t.done ? c.line : c.ink} $ls={t.ls ?? 0.6} $shift={1}>{t.name}</Text></TitleItem>
            {t.subtasks && (
              <TitleItem $left={29}>
                {t.comments && <TaskMeta><Text $size={26} $color={c.grey}>{t.comments}</Text><BubbleIcon /></TaskMeta>}
                <TaskMeta><Text $size={26} $color={c.grey}>{t.subtasks}</Text><SubtaskIcon /></TaskMeta>
              </TitleItem>
            )}
          </TaskCell>
          <TaskCell $split /><TaskCell $split /><TaskCell $split />
        </TaskRow>
      ))}
    </TaskTable>
    <AddTaskLine><Text $size={29} $color={c.grey} $ls={0.05}>Add task...</Text></AddTaskLine>
    <AddSectionLine><PlusIcon size={27} stroke={3.200} color={c.grey} /><Text $size={34} $weight={500} $color={c.grey} $ls={-0.09}>Add section</Text></AddSectionLine>
  </Pane>
);

export default function App() {
  return (
    <>
      <GlobalStyle />
      <Desktop>
        <Relay />
        <Editor />
        <AsanaWindow><Sidebar /><TaskPane /></AsanaWindow>
      </Desktop>
    </>
  );
}
